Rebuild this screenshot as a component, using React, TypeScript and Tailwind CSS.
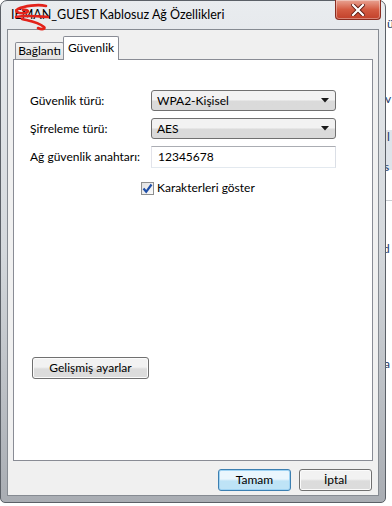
import React from "react";

const font = "font-['Segoe_UI','Lato',sans-serif]";

function ComboBox({ value }: { value: string }) {
  return (
    <div className="flex h-[21px] w-[185px] items-center justify-between rounded-[3px] border border-[#707070] bg-gradient-to-b from-[#f2f2f2] from-45% to-[#dadada] to-55% pl-[5px] pr-[6px]">
      <span className="text-[12px] leading-none text-black">{value}</span>
      <svg width="8" height="5" viewBox="0 0 8 5" aria-hidden="true">
        <path d="M0 0 H8 L4 4.5 Z" fill="#1a1a1a" />
      </svg>
    </div>
  );
}

function Button({ label, primary, className = "" }: { label: string; primary?: boolean; className?: string }) {
  return (
    <button
      className={[
        "flex h-[22px] items-center justify-center rounded-[3px] border text-[12px] leading-none text-black",
        primary
          ? "border-[#3c7fb1] bg-gradient-to-b from-[#eaf6fd] from-45% to-[#bee3f6] to-55% shadow-[inset_0_0_0_1px_#9fd3f3]"
          : "border-[#707070] bg-gradient-to-b from-[#f2f2f2] from-45% to-[#dcdcdc] to-55% shadow-[inset_0_0_0_1px_#fbfbfb]",
        className,
      ].join(" ")}
    >
      {label}
    </button>
  );
}

export default function App() {
  return (
    <div className={`relative flex h-[506px] w-[392px] overflow-hidden bg-white ${font}`}>
      {/* ── Dialog window ── */}
      <div className="relative flex h-[503px] w-[386px] shrink-0 flex-col rounded-t-[7px] rounded-b-[5px] border border-[#5b6067] bg-gradient-to-b from-[#e9ecef] via-[#d4d8dc] to-[#a9adb3] px-[6px] pb-[6px]">
        {/* Title bar */}
        <div className="relative flex h-[28px] items-center pl-[4px]">
          <span className="text-[12.5px] text-black">IEMAN_GUEST Kablosuz Ağ Özellikleri</span>
          {/* red scribble */}
          <svg className="absolute left-[3px] top-[2px]" width="48" height="28" viewBox="0 0 48 28" aria-hidden="true">
            <path
              d="M36 3 C28 1 14 3 8 6 C4 8 8 11 15 10 C20 9 18 6 13 7 M6 14 C16 12 26 13 38 14 M12 16 C20 18 28 19 34 24 C36 26 32 27 28 25"
              fill="none"
              stroke="#e3221a"
              strokeWidth="2.6"
              strokeLinecap="round"
            />
          </svg>
        </div>

        {/* Close button */}
        <div className="absolute right-[4px] top-[-1px] flex h-[20px] w-[46px] items-center justify-center rounded-b-[4px] border border-t-0 border-[#8a2c20] bg-gradient-to-b from-[#e8a393] via-[#d45b42] to-[#c2402a] shadow-[inset_0_0_0_1px_rgba(255,255,255,0.35)]">
          <svg width="14" height="12" viewBox="0 0 14 12" aria-hidden="true">
            <path d="M2 1 L12 11 M12 1 L2 11" stroke="#5c1a12" strokeWidth="4" strokeLinecap="square" />
            <path d="M2 1 L12 11 M12 1 L2 11" stroke="#ffffff" strokeWidth="2.2" strokeLinecap="square" />
          </svg>
        </div>

        {/* Client area */}
        <div className="flex flex-1 flex-col border border-[#868b92] bg-[#f0f0f0] px-[5px]">
          {/* Tabs */}
          <div className="mt-[6px] flex h-[23px] items-end pl-[2px]">
            <div className="flex h-[17px] w-[49px] items-center justify-center rounded-t-[2px] border border-b-0 border-[#898c95] bg-gradient-to-b from-[#f3f3f3] to-[#e3e3e3] text-[12px] leading-none text-black">
              Bağlantı
            </div>
            <div className="relative z-10 -mb-px -ml-px flex h-[24px] w-[56px] items-center justify-center rounded-t-[2px] border border-b-0 border-[#898c95] bg-white pb-[2px] text-[12px] leading-none text-black">
              Güvenlik
            </div>
          </div>

          {/* Tab panel */}
          <div className="flex h-[402px] flex-col border border-[#898c95] bg-white pl-[16px] pt-[30px]">
            <div className="flex items-center">
              <span className="w-[121px] text-[12px] text-black">Güvenlik türü:</span>
              <ComboBox value="WPA2-Kişisel" />
            </div>
            <div className="mt-[7px] flex items-center">
              <span className="w-[121px] text-[12px] text-black">Şifreleme türü:</span>
              <ComboBox value="AES" />
            </div>
            <div className="mt-[7px] flex items-center">
              <span className="w-[121px] text-[12px] text-black">Ağ güvenlik anahtarı:</span>
              <div className="flex h-[22px] w-[185px] items-center border border-[#abadb3] border-b-[#e3e9ef] border-l-[#e2e3ea] border-r-[#dbdfe6] bg-white pl-[6px] text-[12px] leading-none text-black">
                12345678
              </div>
            </div>
            <div className="ml-[111px] mt-[11px] flex items-center gap-[3px]">
              <div className="flex h-[13px] w-[13px] items-center justify-center border border-[#8e8f8f] bg-gradient-to-br from-[#e1e1e1] to-[#fbfbfb]">
                <svg width="11" height="11" viewBox="0 0 11 11" aria-hidden="true">
                  <path d="M1.5 5.5 L4.2 8.8 L9.5 1.5" fill="none" stroke="#1f4fa8" strokeWidth="2.2" />
                </svg>
              </div>
              <span className="text-[12px] text-black">Karakterleri göster</span>
            </div>

            <Button label="Gelişmiş ayarlar" className="ml-[2px] mt-[160px] w-[117px]" />
          </div>

          {/* Dialog buttons */}
          <div className="mt-[8px] flex justify-end gap-[8px] pr-[1px]">
            <Button label="Tamam" primary className="w-[73px]" />
            <Button label="İptal" className="w-[73px]" />
          </div>
        </div>
      </div>

      {/* ── Background window peeking through on the right ── */}
      <div className="relative flex-1 overflow-hidden text-[12px] leading-none text-[#1e3a6a]">
        <span className="absolute left-[1px] top-[18px]">ü</span>
        <span className="absolute left-[-1px] top-[93px]">v</span>
        <span className="absolute left-[0px] top-[130px] h-[40px] w-full bg-[#dfe4ea]" />
        <span className="absolute left-[1px] top-[131px]">l</span>
        <span className="absolute left-[-2px] top-[161px]">s</span>
        <span className="absolute left-0 top-[200px] h-px w-full bg-[#c9cdd2]" />
        <span className="absolute left-[-3px] top-[243px]">d</span>
        <span className="absolute left-[-2px] top-[358px]">a</span>
      </div>
    </div>
  );
}
